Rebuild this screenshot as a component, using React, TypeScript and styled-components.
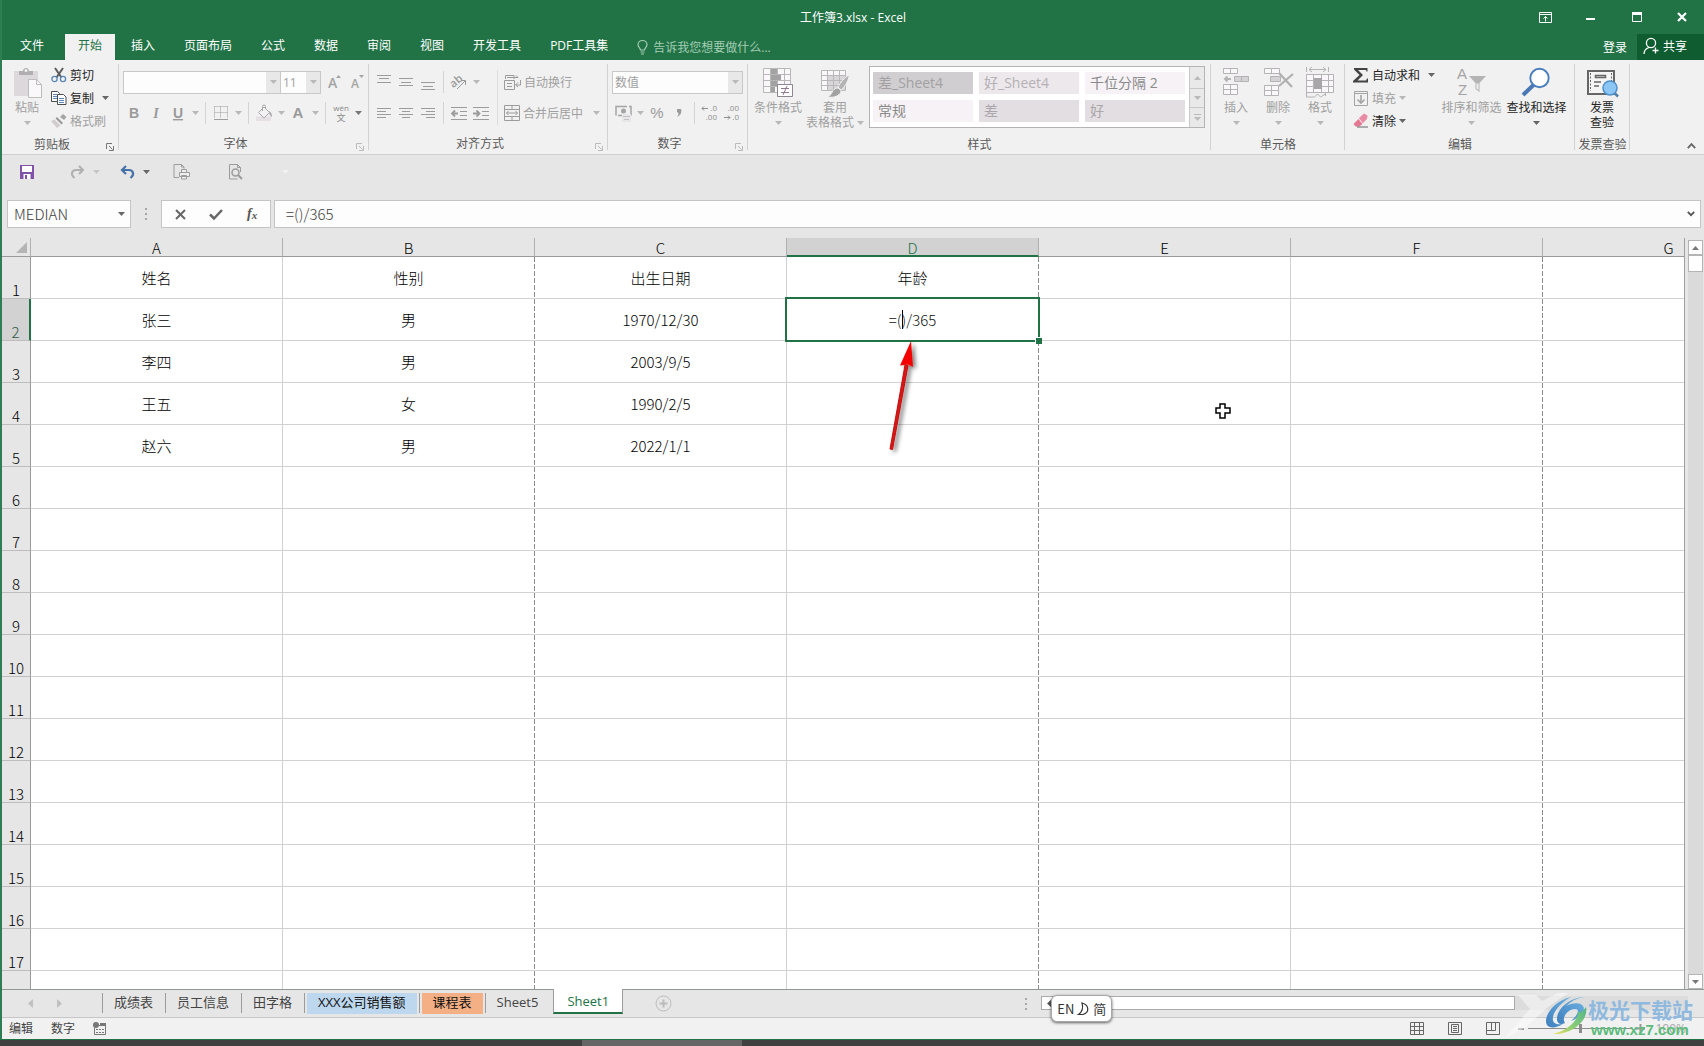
import React from 'react';
import styled, { createGlobalStyle, css } from 'styled-components';

const UI = `"Open Sans", "Noto Sans CJK SC", sans-serif`;
const CELL = `"Noto Sans CJK SC", sans-serif`;
const GREEN = '#217346';

const GlobalStyle = createGlobalStyle`
  * { box-sizing: border-box; }
  body { margin: 0; background: #e6e6e6; font-family: ${UI}; font-size: 12px; color: #262626; }
  button, input, select { font-family: inherit; font-size: inherit; color: inherit; }
  button { border: 0; background: none; padding: 0; margin: 0; white-space: nowrap; }
  svg { display: block; flex: none; overflow: visible; }
`;

const Shell = styled.div`
  height: 100vh;
  display: flex;
  flex-direction: column;
  overflow: hidden;
`;
const Window = styled.div`
  flex: 1;
  min-height: 0;
  display: flex;
  flex-direction: column;
  position: relative;
  border-left: 2px solid #2f7d53;
  border-bottom: 1px solid ${GREEN};
`;

/* ---------- title bar and ribbon tabs ---------- */
const TitleBar = styled.header`
  flex: none;
  height: 34px;
  background: ${GREEN};
  color: #fff;
  display: grid;
  grid-template-columns: 1fr auto 1fr;
  align-items: center;
`;
const Title = styled.h1`
  grid-column: 2;
  margin: 0;
  font-size: 12px;
  font-weight: 400;
`;
const WindowButtons = styled.div`
  display: flex;
  justify-content: flex-end;
  button { width: 46px; height: 30px; display: grid; place-items: center; }
  button:last-child { width: 44px; }
`;
const TabBar = styled.nav`
  flex: none;
  height: 26px;
  background: ${GREEN};
  color: #fff;
  display: flex;
  gap: 3px;
`;
const RibbonTab = styled.button<{ $active?: boolean; $file?: boolean }>`
  padding: 0 13px 2px;
  line-height: 22px;
  ${p => p.$file && css`width: 60px;`}
  ${p => p.$active && css`background: #f1f1f1; color: ${GREEN};`}
`;
const TellMe = styled.button`
  display: flex;
  align-items: center;
  gap: 5px;
  padding-left: 13px;
  color: #a3cdb4;
`;
const Account = styled.div`
  margin-left: auto;
  display: flex;
  gap: 10px;
`;
const Share = styled.button`
  display: flex;
  align-items: center;
  gap: 4px;
  width: 67px;
  padding: 0 0 2px 6px;
  background: #0e5c2f;
`;

/* ---------- ribbon ---------- */
const Ribbon = styled.section`
  flex: none;
  display: flex;
  height: 95px;
  background: #f1f1f1;
  border-bottom: 1px solid #cfcfcf;
`;
const GroupBox = styled.div<{ $w: number }>`
  position: relative;
  flex: none;
  width: ${p => p.$w}px;
  display: flex;
  flex-direction: column;
  &::after {
    content: '';
    position: absolute;
    right: 0;
    top: 4px;
    bottom: 4px;
    width: 1px;
    background: #d2d2d2;
  }
`;
const GroupBody = styled.div<{ $pad: number }>`
  flex: 1;
  display: flex;
  padding-left: ${p => p.$pad}px;
`;
const GroupLabel = styled.div<{ $launch: boolean }>`
  height: 18px;
  margin-bottom: 1px;
  padding-right: ${p => (p.$launch ? 17 : 0)}px;
  line-height: 18px;
  text-align: center;
  color: #5a5a5a;
  white-space: nowrap;
`;
const Launcher = styled.button`
  position: absolute;
  right: 5px;
  bottom: 3px;
`;
const Stack = styled.div<{ $w?: number }>`
  display: flex;
  flex-direction: column;
  padding-top: 3px;
  ${p => p.$w && css`width: ${p.$w}px;`}
`;
const SmallButton = styled.button<{ $off?: boolean; $far?: boolean }>`
  height: 23px;
  display: flex;
  align-items: center;
  gap: 3px;
  color: ${p => (p.$off ? '#a0a0a0' : '#262626')};
  svg:nth-of-type(2) { margin-left: ${p => (p.$far ? 5 : 0)}px; }
`;
const BigButton = styled.button<{ $w: number; $off?: boolean }>`
  width: ${p => p.$w}px;
  height: 70px;
  margin-top: 6px;
  display: flex;
  flex-direction: column;
  align-items: center;
  line-height: 15px;
  color: ${p => (p.$off ? '#a0a0a0' : '#262626')};
  > svg:first-child { margin-bottom: 2px; }
`;
const BelowCaret = styled.span`
  height: 15px;
  display: grid;
  place-items: center;
`;
const SecondLine = styled.span`
  display: flex;
  align-items: center;
  gap: 3px;
`;
const Rows = styled.div<{ $w?: number; $grow?: boolean }>`
  display: flex;
  flex-direction: column;
  gap: 7px;
  padding-top: 10px;
  ${p => p.$w && css`width: ${p.$w}px;`}
  ${p => p.$grow && css`flex: 1;`}
`;
const Row = styled.div`
  display: flex;
  align-items: center;
  height: 24px;
`;
const Tool = styled.button`
  width: 22px;
  height: 24px;
  display: grid;
  place-items: center;
`;
const WideTool = styled(Tool)`
  width: 24px;
  &:first-of-type { margin-left: 4px; }
`;
const CaretTool = styled.button<{ $end?: boolean }>`
  width: 12px;
  height: 24px;
  display: grid;
  place-items: center;
  ${p => p.$end && css`margin-left: auto; margin-right: 6px;`}
`;
const Rule = styled.span`
  width: 1px;
  height: 22px;
  margin: 0 4px;
  background: #d4d4d4;
`;
const TallRule = styled.span`
  width: 1px;
  height: 55px;
  margin: 10px 6px 0 0;
  background: #dcdcdc;
`;
const TextTool = styled.button`
  display: flex;
  align-items: center;
  gap: 3px;
  color: #a0a0a0;
`;
const SelectBox = styled.label<{ $w: number }>`
  width: ${p => p.$w}px;
  height: 23px;
  display: flex;
  border: 1px solid #c8c8c8;
  background: #fdfdfd;
  margin-right: -1px;
  select {
    appearance: none;
    flex: 1;
    min-width: 0;
    border: 0;
    padding: 0 2px;
    background: none;
    color: #a0a0a0;
  }
  span {
    width: 14px;
    display: grid;
    place-items: center;
    background: #e8e8e8;
  }
`;
const Gallery = styled.div`
  display: flex;
  height: 62px;
  margin: 6px 0 0 2px;
  border: 1px solid #b4b4b4;
  background: #fff;
`;
const Swatches = styled.div`
  display: grid;
  grid-template-columns: repeat(3, 100px);
  grid-template-rows: 22px 22px;
  gap: 6px;
  padding: 5px 4px 5px 3px;
`;
const Swatch = styled.button<{ $bg: string; $fg: string }>`
  padding-left: 5px;
  text-align: left;
  font-size: 14px;
  line-height: 20px;
  background: ${p => p.$bg};
  color: ${p => p.$fg};
`;
const GalleryScroll = styled.div`
  width: 15px;
  display: grid;
  grid-template-rows: 21px 19px 1fr;
  border-left: 1px solid #c8c8c8;
  background: #e9e9e9;
  button { display: grid; place-items: center; }
  button + button { border-top: 1px solid #c8c8c8; }
`;
const Collapse = styled.button`
  align-self: flex-end;
  margin: 0 8px 5px auto;
`;

/* ---------- quick access and formula bar ---------- */
const QuickAccess = styled.div`
  flex: none;
  height: 45px;
  display: flex;
  align-items: center;
  padding: 0 0 12px 14px;
`;
const Quick = styled.button<{ $gap: number; $before?: number }>`
  width: 22px;
  height: 22px;
  display: grid;
  place-items: center;
  margin: 0 ${p => p.$gap}px 0 ${p => p.$before ?? 0}px;
`;
const FormulaBar = styled.div`
  flex: none;
  display: flex;
  height: 28px;
  padding: 0 3px 0 5px;
  margin-bottom: 10px;
`;
const Field = styled.label<{ $w?: number; $pad: number }>`
  display: flex;
  align-items: center;
  ${p => (p.$w ? css`width: ${p.$w}px;` : css`flex: 1;`)}
  padding: 0 5px 0 ${p => p.$pad}px;
  background: #fdfdfd;
  border: 1px solid #c4c4c4;
  input {
    flex: 1;
    min-width: 0;
    border: 0;
    padding: 0;
    background: none;
    outline: none;
    font: 300 15px/20px ${CELL};
    color: #404040;
  }
`;
const Grip = styled.span<{ $w: number; $push?: boolean }>`
  width: ${p => p.$w}px;
  display: grid;
  place-items: center;
  ${p => p.$push && css`margin-left: auto;`}
`;
const FormulaButtons = styled.div`
  display: flex;
  width: 110px;
  margin-right: 3px;
  background: #fdfdfd;
  border: 1px solid #c4c4c4;
  button { flex: 1; display: grid; place-items: center; }
`;

/* ---------- sheet ---------- */
const SheetArea = styled.main`
  flex: 1;
  min-height: 0;
  display: flex;
  border-bottom: 1px solid #8f9a93;
`;
const GridPane = styled.div`
  flex: 1;
  min-width: 0;
  overflow: hidden;
  background: #fff;
  border-right: 1px solid #a0a0a0;
`;
const Grid = styled.table`
  table-layout: fixed;
  width: 1793px;
  border-collapse: separate;
  border-spacing: 0;
  font: 300 15px/20px ${CELL};
  color: #000;
`;
const HeadCol = styled.col`width: 29px;`;
const DataCol = styled.col`width: 252px;`;
const ColHead = styled.th<{ $active?: boolean }>`
  height: 19px;
  padding: 2px 0 0;
  font-weight: 300;
  line-height: 16px;
  background: #e6e6e6;
  border-right: 1px solid #b0b0b0;
  border-bottom: 1px solid #9a9a9a;
  ${p => p.$active && css`background: #d2d2d2; color: ${GREEN}; border-bottom: 2px solid ${GREEN}; line-height: 15px;`}
`;
const Corner = styled.td`
  padding: 0;
  background: #e6e6e6;
  border-right: 1px solid #b0b0b0;
  border-bottom: 1px solid #9a9a9a;
  svg { margin-left: 14px; }
`;
const RowHead = styled.th<{ $active?: boolean }>`
  height: 42px;
  padding: 0;
  vertical-align: bottom;
  font-weight: 300;
  line-height: 16px;
  background: #e6e6e6;
  border-right: 1px solid #9a9a9a;
  border-bottom: 1px solid #bdbdbd;
  ${p => p.$active && css`background: #d2d2d2; color: #2f5a44; border-right: 2px solid ${GREEN};`}
`;
const Cell = styled.td<{ $pageBreak: boolean; $editing: boolean }>`
  position: relative;
  height: 42px;
  padding: 0;
  text-align: center;
  border-bottom: 1px solid #d2d2d2;
  ${p => p.$editing && css`z-index: 1;`}
  ${p =>
    p.$pageBreak
      ? css`
          border-right: 1px solid transparent;
          background: repeating-linear-gradient(#8c8c8c 0 5px, #fff 5px 7px) right top / 1px 42px no-repeat border-box;
        `
      : css`border-right: 1px solid #d2d2d2;`}
`;
const EditFrame = styled.div`
  position: absolute;
  inset: -2px -2px -2px -2px;
  border: 2px solid ${GREEN};
  background: #fff;
  display: flex;
  &::after {
    content: '';
    position: absolute;
    right: -4px;
    bottom: -4px;
    width: 6px;
    height: 6px;
    background: ${GREEN};
    border-left: 1px solid #fff;
    border-top: 1px solid #fff;
  }
  input {
    width: 100%;
    border: 0;
    padding: 0;
    text-align: center;
    background: none;
    outline: none;
    font: 300 15px/20px ${CELL};
    color: #111;
  }
`;
const TextCaret = styled.span`
  position: absolute;
  left: calc(50% - 11px);
  top: 11px;
  width: 1px;
  height: 19px;
  background: #000;
`;
const ArrowMark = styled.svg`
  position: absolute;
  left: 98px;
  top: 41px;
  z-index: 2;
  pointer-events: none;
`;
const Pointer = styled.svg`
  position: absolute;
  left: 176px;
  top: 20px;
`;
const VScroll = styled.div`
  width: 15px;
  margin: 2px 1px 0 3px;
  display: flex;
  flex-direction: column;
  justify-content: space-between;
  background: #dadada;
  button, i {
    display: grid;
    place-items: center;
    width: 15px;
    height: 15px;
    background: #fff;
    border: 1px solid #b4b4b4;
  }
  i { height: 17px; }
`;

/* ---------- sheet tabs and status bar ---------- */
const SheetTabs = styled.div`
  flex: none;
  height: 28px;
  display: flex;
  border-bottom: 1px solid #c6c6c6;
  font-size: 13px;
`;
const TabNav = styled.div`
  width: 100px;
  display: flex;
  align-items: center;
  padding-left: 26px;
  gap: 24px;
`;
const SheetTab = styled.button<{ $bg?: string }>`
  height: 20px;
  margin-top: 3px;
  border-left: 1px solid #9c9c9c;
  color: ${p => (p.$bg ? '#111' : '#444')};
  span {
    display: block;
    margin: 0 2px 0 ${p => (p.$bg ? 2 : 1)}px;
    padding: 0 ${p => (p.$bg ? 11 : 10)}px;
    line-height: 18px;
    height: 21px;
    background: ${p => p.$bg || 'none'};
  }
`;
const ActiveTab = styled.button`
  height: 25px;
  margin: -1px 0 0 3px;
  padding: 0 13px;
  line-height: 24px;
  color: ${GREEN};
  background: #fff;
  border: 1px solid #9c9c9c;
  border-top: 0;
  border-bottom: 2px solid ${GREEN};
`;
const AddSheet = styled.button`
  margin-left: 32px;
`;
const HScroll = styled.div`
  position: relative;
  flex: 0 0 38%;
  height: 14px;
  margin: 6px 16px 0 0;
  background: #dcdcdc;
`;
const HThumb = styled.div`
  display: flex;
  align-items: center;
  width: 474px;
  height: 14px;
  padding-left: 5px;
  background: #fff;
  border: 1px solid #ababab;
`;
const InputMode = styled.div`
  position: absolute;
  left: 10px;
  top: -1px;
  display: flex;
  align-items: center;
  gap: 4px;
  height: 27px;
  padding: 0 5px;
  border-radius: 6px;
  border: 1px solid #a8a8a8;
  background: #fff;
  box-shadow: 0 1px 3px rgba(0, 0, 0, 0.6);
  white-space: nowrap;
  font: 13px/20px ${CELL};
  color: #333;
`;
const StatusBar = styled.footer`
  flex: none;
  height: 21px;
  display: flex;
  align-items: center;
  gap: 18px;
  padding: 0 18px 0 7px;
  background: #f1f1f1;
  color: #444;
  line-height: 18px;
`;
const Views = styled.div`
  margin-left: auto;
  display: flex;
  gap: 24px;
`;
const Zoom = styled.div`
  display: flex;
  align-items: center;
  gap: 4px;
  color: #a8a8a8;
  font-size: 12px;
  input {
    appearance: none;
    width: 104px;
    height: 1px;
    margin: 0;
    background: #8c8c8c;
  }
  input::-webkit-slider-thumb {
    appearance: none;
    width: 3px;
    height: 9px;
    background: #8c8c8c;
  }
  span { margin-left: 6px; }
`;
const Taskbar = styled.div`
  flex: none;
  height: 6px;
  padding-left: 582px;
  background: #404040;
  i { display: block; width: 160px; height: 6px; background: #666; }
`;
const Brand = styled.div`
  position: absolute;
  right: 11px;
  bottom: 0;
  display: flex;
  align-items: flex-end;
  pointer-events: none;
`;
const BrandText = styled.div`
  display: flex;
  flex-direction: column;
  strong {
    font: 700 21px/24px ${CELL};
    color: #8fb9de;
    white-space: nowrap;
  }
  em {
    font: 700 15px/18px "Liberation Sans", sans-serif;
    color: #5cbc7c;
    padding-left: 3px;
  }
`;

/* ---------- drawings ---------- */
const Caret = ({ c = '#b8b8b8' }: { c?: string }) => (
  <svg width="7" height="4" viewBox="0 0 7 4"><path d="M0 0h7L3.5 4z" fill={c} /></svg>
);
const Up = ({ c = '#777' }: { c?: string }) => (
  <svg width="7" height="4" viewBox="0 0 7 4"><path d="M0 4h7L3.5 0z" fill={c} /></svg>
);
const Side = ({ c, flip }: { c: string; flip?: boolean }) => (
  <svg width="5" height="9" viewBox="0 0 5 9"><path d={flip ? 'M0 0v9l5-4.5z' : 'M5 0v9L0 4.5z'} fill={c} /></svg>
);
const LaunchIcon = ({ c }: { c: string }) => (
  <svg width="8" height="8" viewBox="0 0 8 8" fill="none" stroke={c}>
    <path d="M.5 6V.5H6M3 3l3.5 3.5M7.500 3v4.500H3" />
  </svg>
);
const Dots = () => (
  <svg width="2" height="12" viewBox="0 0 2 12" fill="#a6a6a6">
    <path d="M0 0h2v2H0zM0 5h2v2H0zM0 10h2v2H0z" />
  </svg>
);
const Lines = ({ rows }: { rows: [number, number, number][] }) => (
  <svg width="14" height="16" viewBox="0 0 14 16" stroke="#9c9c9c">
    {rows.map(([x1, x2, y]) => <path key={y} d={`M${x1} ${y}.5H${x2}`} />)}
  </svg>
);
const PasteIcon = () => (
  <svg width="32" height="32" viewBox="0 0 32 32">
    <path d="M3 5h24v25H3z" fill="#dcd8dc" />
    <path d="M8 9V5h4c0-4 6-4 6 0h4v4z" fill="#b0aeb0" />
    <circle cx="15" cy="4.500" r="1.500" fill="#f1f1f1" />
    <path d="M17.500 13.500h8l5 5v13h-13z" fill="#fbf8fb" stroke="#bdbdbd" />
    <path d="M25.500 13.500v5h5" fill="none" stroke="#bdbdbd" />
  </svg>
);
const CutIcon = () => (
  <svg width="16" height="16" viewBox="0 0 16 16" fill="none">
    <path d="M4 1l6.500 9.500M12 1L5.500 10.500" stroke="#5c5c5c" strokeWidth="2" />
    <circle cx="3.500" cy="12" r="2.600" stroke="#5b86b8" strokeWidth="1.300" />
    <circle cx="12" cy="12" r="2.600" stroke="#5b86b8" strokeWidth="1.300" />
  </svg>
);
const CopyIcon = () => (
  <svg width="16" height="16" viewBox="0 0 16 16" fill="#fff" stroke="#4d4d4d">
    <path d="M.5 1.500h6l2 2v8h-8z" />
    <path d="M2 4.500h4M2 6.500h4M2 8.500h4" stroke="#5b86b8" />
    <path d="M6.500 4.500h6l2.500 2.500v7.500H6.500z" />
    <path d="M8 8.500h5M8 10.500h5M8 12.500h5" stroke="#5b86b8" />
  </svg>
);
const BrushIcon = () => (
  <svg width="16" height="16" viewBox="0 0 16 16">
    <path d="M9 4l3-3 3.500 3-2.500 3z" fill="#a4a4a4" />
    <path d="M6 4l6 6-1.500 1.500-6-6z" fill="#9a9a9a" />
    <path d="M3.500 6.500l6 6L6 15 0 8z" fill="#d0ccd0" />
  </svg>
);
const Letter = ({ t, size = 14, style }: { t: string; size?: number; style?: React.CSSProperties }) => (
  <svg width="16" height="18" viewBox="0 0 16 18">
    <text x="8" y="14" textAnchor="middle" fontFamily="Liberation Sans, sans-serif" fontSize={size} fill="#9a9a9a" style={style}>{t}</text>
  </svg>
);
const GrowIcon = ({ down }: { down?: boolean }) => (
  <svg width="16" height="20" viewBox="0 0 16 20">
    <text x="0" y="16" fontFamily="Open Sans, sans-serif" fontWeight="600" fontSize={down ? 12 : 14} fill="#a4a4a4">A</text>
    <path d={down ? 'M8 3h5l-2.500 3z' : 'M8 6h5l-2.500-3z'} fill="#a4a4a4" />
  </svg>
);
const BordersIcon = () => (
  <svg width="14" height="14" viewBox="0 0 14 14" fill="none" stroke="#9c9c9c">
    <path d="M.5.5h13M.5 6.500h13M.5.5v12M6.500.5v12M13.500.5v12" strokeDasharray="1 1" />
    <path d="M0 13.500h14" />
  </svg>
);
const FillColorIcon = () => (
  <svg width="17" height="16" viewBox="0 0 17 16" fill="none">
    <path d="M0 11.500h15V16H0z" fill="#e6e0e4" />
    <path d="M2.500 7.500L8 2l5.500 5.500L8 13z" fill="#f4f1f4" stroke="#a8a8a8" />
    <path d="M6.500 6V1.500a1.500 1.500 0 013 0V4" stroke="#a8a8a8" />
    <path d="M13 6c2 1 3 3 3 6-2-1-3-3-3-6z" fill="#a8a8a8" />
  </svg>
);
const PinyinIcon = () => (
  <svg width="18" height="20" viewBox="0 0 18 20" fill="#888">
    <text x="9" y="8" textAnchor="middle" fontFamily="Open Sans" fontSize="8">wén</text>
    <text x="9" y="18" textAnchor="middle" fontFamily="Noto Sans CJK SC" fontSize="9">文</text>
  </svg>
);
const OrientIcon = () => (
  <svg width="18" height="18" viewBox="0 0 18 18" fill="none">
    <text x="0" y="12" fontFamily="Open Sans" fontSize="11" fontWeight="600" fill="#989898" transform="rotate(-40 6 9)">ab</text>
    <path d="M7 16L15 8M11 7.500h4.500V12" stroke="#989898" />
  </svg>
);
const IndentIcon = ({ right }: { right?: boolean }) => (
  <svg width="16" height="13" viewBox="0 0 16 13" fill="none" stroke="#9c9c9c">
    <path d="M0 .5h16M9 4.500h7M9 8.500h7M0 12.500h16" />
    <path d={right ? 'M0 6.500h6M3.500 3.500l3 3-3 3' : 'M1 6.500h6M4 3.500l-3 3 3 3'} strokeWidth="1.800" />
  </svg>
);
const WrapIcon = () => (
  <svg width="17" height="16" viewBox="0 0 17 16" fill="none" stroke="#9c9c9c">
    <path d="M1.500 5V1.500H10V5M3 3.500h11M12 1.500l2 2" />
    <path d="M.5 6.500h10v9H.5zM3 9.500h5M3 12.500h5" />
    <path d="M16.500 6v5H12M14 8.500L11.500 11l2.500 2" />
  </svg>
);
const MergeIcon = () => (
  <svg width="16" height="16" viewBox="0 0 16 16" fill="none" stroke="#9c9c9c">
    <path d="M.5.500h15v15H.5zM.5 4.500h15M.5 11.500h15M8 0v4.500M8 11.500V16" />
    <path d="M2.500 8h11M4.500 6L2.500 8l2 2M11.500 6l2 2-2 2" />
  </svg>
);
const MoneyIcon = () => (
  <svg width="17" height="17" viewBox="0 0 17 17" fill="none">
    <path d="M1 1.500h15v9H1z" stroke="#a4a4a4" strokeWidth="1.500" strokeDasharray="11 2" />
    <circle cx="8.500" cy="6" r="2.500" fill="#a4a4a4" />
    <path d="M7 9h9v8H7z" fill="#e9e6e9" />
    <path d="M8 11.500h7M9 14.500h5" stroke="#c4c0c4" />
  </svg>
);
const DecimalIcon = ({ less }: { less?: boolean }) => (
  <svg width="18" height="20" viewBox="0 0 18 20" fill="#8e8e8e">
    <text x="16" y="8" textAnchor="end" fontFamily="Open Sans" fontSize="8">{less ? '.00' : '.0'}</text>
    <text x="16" y="17" textAnchor="end" fontFamily="Open Sans" fontSize="8">{less ? '.0' : '.00'}</text>
    <path d={less ? 'M1 14.500h6M5 12.500l2 2-2 2' : 'M1 5.500h6M3 3.500l-2 2 2 2'} fill="none" stroke="#8e8e8e" />
  </svg>
);
const CondIcon = () => (
  <svg width="32" height="32" viewBox="0 0 32 32" fill="none" stroke="#b8b8b8">
    <path d="M1.500 2.500h27v24h-27zM1.500 8.500h27M1.500 14.500h27M1.500 20.500h27M8.500 2.500v24M15.500 2.500v24M22.500 2.500v24" fill="#f9f7f9" />
    <path d="M9 3h6v5H9zM9 9h10v5H9zM9 15h6v5H9zM9 21h4v5H9z" fill="#a2a2a2" stroke="none" />
    <path d="M15.500 18.500h15v12h-15z" fill="#fff" stroke="#8d8590" />
    <path d="M19 22.500h8M19 26.500h8M25 20l-4 9" stroke="#8d7a90" />
  </svg>
);
const TableFmtIcon = () => (
  <svg width="32" height="32" viewBox="0 0 32 32" fill="none" stroke="#b8b8b8">
    <path d="M2.500 4.500h24v20h-24z" fill="#f9f7f9" />
    <path d="M8 10h18v14H8z" fill="#d8d6d8" stroke="none" />
    <path d="M2.500 9.500h24M2.500 14.500h24M2.500 19.500h24M8.500 4.500v20M14.500 4.500v20M20.500 4.500v20" />
    <path d="M30 9c-4 2-9 8-11 12l3 3c4-3 7-9 8-13z" fill="#b4b4b4" stroke="#f1f1f1" />
    <path d="M18 22c2 0 4 2 4 4-2 4-7 6-13 5 4-2 4-8 9-9z" fill="#a2a2a2" stroke="#f1f1f1" />
  </svg>
);
const InsertIcon = () => (
  <svg width="32" height="32" viewBox="0 0 32 32" fill="#f9f7f9" stroke="#b4b4b4">
    <path d="M3.500 2.500h14v5h-14zM10.500 2.500v5M3.500 18.500h14v10h-14zM3.500 23.500h14M10.500 18.500v10" />
    <path d="M14.500 10.500h14v5h-14zM21.500 10.500v5" fill="#d4d2d4" />
    <path d="M11 13H5M7.500 10.500L5 13l2.500 2.500" fill="none" strokeWidth="2" />
  </svg>
);
const DeleteIcon = () => (
  <svg width="32" height="32" viewBox="0 0 32 32" fill="#f9f7f9" stroke="#b4b4b4">
    <path d="M2.500 2.500h15v5h-15zM9.500 2.500v5M2.500 19.500h14v10h-14zM2.500 24.500h14M9.500 19.500v10" />
    <path d="M8.500 10.500h10v5h-10z" fill="#d4d2d4" />
    <path d="M17 7l13 14M31 8L17 20" fill="none" stroke="#b0b0b0" strokeWidth="2.200" />
  </svg>
);
const FormatIcon = () => (
  <svg width="32" height="32" viewBox="0 0 32 32" fill="none" stroke="#b4b4b4">
    <path d="M2.500 1v5M24.500 1v5M5 3.500h17M8 1L5 3.500 8 6M19 1l3 2.500L19 6" />
    <path d="M2.500 8.500h27v18h-27zM2.500 14.500h27M2.500 20.500h27M9.500 8.500v18M17.500 8.500v18M24.500 8.500v18" fill="#f9f7f9" />
    <path d="M10 12h8v11h-8z" fill="#a8a6a8" stroke="none" />
    <path d="M2.500 26v5h8l3-3 3 3 5-3M21.500 30v-3" />
  </svg>
);
const SumIcon = () => (
  <svg width="16" height="16" viewBox="0 0 16 16"><path d="M1 1h13.500v3.500h-1L13 3H5l5 5-5.500 5.500H13l1-2h1V15.500H0V14l6.500-6L1 2.500z" fill="#444" /></svg>
);
const FillIcon = () => (
  <svg width="16" height="16" viewBox="0 0 16 16" fill="none" stroke="#a4a4a4">
    <path d="M1.500 1.500h13v14h-13zM1.500 3.500h13" />
    <path d="M8 5v8M4.500 9.500L8 13l3.500-3.500" strokeWidth="1.600" />
  </svg>
);
const EraserIcon = () => (
  <svg width="16" height="16" viewBox="0 0 16 16">
    <path d="M6 5l5-4.500 3.500 2L14 6l-4.500 4.500z" fill="#e98ba4" />
    <path d="M6 5.500L9.500 11 6 13.500H2.500L.5 11z" fill="#e57792" />
    <path d="M5.500 5.500l4 5" fill="none" stroke="#fff" strokeWidth=".8" />
    <path d="M4 14h11" stroke="#666" />
  </svg>
);
const SortIcon = () => (
  <svg width="32" height="32" viewBox="0 0 32 32">
    <text x="1" y="13" fontFamily="Liberation Sans" fontWeight="400" fontSize="15" fill="#a4a4a4">A</text>
    <text x="2" y="29" fontFamily="Liberation Sans" fontWeight="400" fontSize="15" fill="#a4a4a4">Z</text>
    <path d="M13 10h17l-6.500 7v9l-4-3v-6z" fill="#b4b4b4" />
    <path d="M20.500 17.500v5l2 1.500v-6.500" fill="#f1f1f1" />
  </svg>
);
const FindIcon = () => (
  <svg width="32" height="32" viewBox="0 0 32 32" fill="none">
    <path d="M13.500 18L2 29" stroke="#4a78b5" strokeWidth="4" />
    <circle cx="18.500" cy="12" r="9.200" fill="#fff" stroke="#4a7ebb" strokeWidth="1.900" />
  </svg>
);
const InvoiceIcon = () => (
  <svg width="32" height="32" viewBox="0 0 32 32" fill="none" stroke="#666">
    <path d="M2 5h26v23H2z" fill="#f4f4f4" strokeWidth="2" />
    <path d="M4.500 7v18M25.500 7v8" strokeDasharray="2 1.500" />
    <path d="M9.500 9.500h10v2h-10zM8 16h7M8 20h5" strokeWidth="1.500" />
    <path d="M27 25.500l5 5" stroke="#4f7fa8" strokeWidth="2.500" />
    <circle cx="24" cy="22" r="7" fill="#8cc6f5" stroke="#4f8fc8" strokeWidth="1.500" />
  </svg>
);
const BulbIcon = () => (
  <svg width="11" height="15" viewBox="0 0 11 15" fill="none" stroke="#a3cdb4">
    <path d="M3.500 10C3.500 8 1 7 1 4.800a4.500 4.300 0 019 0C10 7 7.500 8 7.500 10zM3.500 12h4M4 14h3" strokeWidth="1.200" />
  </svg>
);
const PersonIcon = () => (
  <svg width="16" height="18" viewBox="0 0 16 18" fill="none" stroke="#fff" strokeWidth="1.300">
    <circle cx="8" cy="6" r="4.600" />
    <path d="M1 17c0-3.500 2-5.500 5-6.500M12.500 10.500v6M9.500 13.500h6" />
  </svg>
);
const BrandMark = () => (
  <svg width="84" height="46" viewBox="0 0 84 46">
    <defs>
      <linearGradient id="leaf" x1="1" y1="0" x2="0" y2="1">
        <stop offset="0" stopColor="#4fb48a" />
        <stop offset=".6" stopColor="#8fcf74" />
        <stop offset="1" stopColor="#eee15a" />
      </linearGradient>
      <linearGradient id="wave" x1="1" y1="0" x2="0" y2="1">
        <stop offset="0" stopColor="#6db4e4" />
        <stop offset="1" stopColor="#3f7fbe" />
      </linearGradient>
    </defs>
    <path d="M0 46L26 16 14 2h18l6 6L54 0h10L44 14 22 34z" fill="#fff" opacity=".45" />
    <path d="M67 4C53 7 42 19 42 28c0 8 9 8 17 3-7 1-11-1-10-7C50 17 58 9 67 4z" fill="url(#wave)" />
    <path d="M80 4C65 5 53 16 53 26c0 5 4 6 8 4-4-5 3-15 11-14 4 1 1 7-5 12 10-4 15-11 12-15-3-4-11-3-17 0C67 8 73 5 80 4z" fill="url(#wave)" />
    <path d="M82 14c3 14-15 28-33 27 10-2 25-11 25-22 4 0 6-2 8-5z" fill="url(#leaf)" />
  </svg>
);

type GroupProps = { w: number; pad: number; label: string; launch?: string; children: React.ReactNode };
const Group = ({ w, pad, label, launch, children }: GroupProps) => (
  <GroupBox $w={w} role="group" aria-label={label}>
    <GroupBody $pad={pad}>{children}</GroupBody>
    <GroupLabel $launch={!!launch}>{label}</GroupLabel>
    {launch && <Launcher aria-label={`${label}设置`}><LaunchIcon c={launch} /></Launcher>}
  </GroupBox>
);

const tabs = ['插入', '页面布局', '公式', '数据', '审阅', '视图', '开发工具', 'PDF工具集'];
const columns = ['A', 'B', 'C', 'D', 'E', 'F', 'G'];
const pageBreakAfter = [1, 3, 5];
const data: string[][] = [
  ['姓名', '性别', '出生日期', '年龄'],
  ['张三', '男', '1970/12/30'],
  ['李四', '男', '2003/9/5'],
  ['王五', '女', '1990/2/5'],
  ['赵六', '男', '2022/1/1'],
];
const rowNumbers = Array.from({ length: 18 }, (_, i) => i);
const swatches = [
  ['差_Sheet4', '#d0ced0', '#a2a0a2'],
  ['好_Sheet4', '#ece8ec', '#b4b0b4'],
  ['千位分隔 2', '#f6f2f6', '#8a8a8a'],
  ['常规', '#f6f2f6', '#8a8a8a'],
  ['差', '#e2dee2', '#aaa6aa'],
  ['好', '#e2dee2', '#aaa6aa'],
];

const EditingCell = () => (
  <>
    <EditFrame>
      <input aria-label="D2" defaultValue="=()/365" />
      <TextCaret />
    </EditFrame>
    <ArrowMark width="44" height="118" viewBox="0 0 44 118">
      <defs>
        <filter id="arrowShadow" x="-50%" y="-20%" width="200%" height="140%">
          <feDropShadow dx="3" dy="2" stdDeviation="2" floodColor="#000" floodOpacity=".5" />
        </filter>
      </defs>
      <g filter="url(#arrowShadow)">
        <path d="M5 109L20 25l3 .5L7.500 109.500z" fill="#d81414" stroke="#c01010" />
        <path d="M26 1l2 26-5-2.500-8 1z" fill="#f50000" />
      </g>
    </ArrowMark>
  </>
);

export default function App() {
  return (
    <Shell>
      <GlobalStyle />
      <Window>
        <TitleBar>
          <Title>工作簿3.xlsx - Excel</Title>
          <WindowButtons>
            <button aria-label="功能区显示选项">
              <svg width="13" height="11" viewBox="0 0 13 11" fill="none" stroke="#fff"><path d="M.5.500h12v10H.5zM.5 2.500h12M6.500 9.500v-5M4.500 6.500l2-2 2 2" /></svg>
            </button>
            <button aria-label="最小化">
              <svg width="10" height="10" viewBox="0 0 10 10"><path d="M0 6h9v2H0z" fill="#fff" /></svg>
            </button>
            <button aria-label="最大化">
              <svg width="10" height="10" viewBox="0 0 10 10"><path d="M.5 1.500h9v8h-9z" fill="none" stroke="#fff" /><path d="M0 0h10v3H0z" fill="#fff" /></svg>
            </button>
            <button aria-label="关闭">
              <svg width="10" height="10" viewBox="0 0 10 10"><path d="M1 1l8 8M9 1L1 9" stroke="#fff" strokeWidth="2.200" /></svg>
            </button>
          </WindowButtons>
        </TitleBar>

        <TabBar>
          <RibbonTab $file>文件</RibbonTab>
          <RibbonTab $active>开始</RibbonTab>
          {tabs.map(t => <RibbonTab key={t}>{t}</RibbonTab>)}
          <TellMe><BulbIcon />告诉我您想要做什么...</TellMe>
          <Account>
            <button>登录</button>
            <Share><PersonIcon />共享</Share>
          </Account>
        </TabBar>

        <Ribbon>
          <Group w={117} pad={1} label="剪贴板" launch="#777">
            <BigButton $w={48} $off><PasteIcon />粘贴<BelowCaret><Caret /></BelowCaret></BigButton>
            <Stack>
              <SmallButton><CutIcon />剪切</SmallButton>
              <SmallButton $far><CopyIcon />复制<Caret c="#666" /></SmallButton>
              <SmallButton $off><BrushIcon />格式刷</SmallButton>
            </Stack>
          </Group>

          <Group w={250} pad={4} label="字体" launch="#bbb">
            <Rows>
              <Row>
                <SelectBox $w={158}><select aria-label="字体"><option></option></select><span><Caret /></span></SelectBox>
                <SelectBox $w={41}><select aria-label="字号"><option>11</option></select><span><Caret /></span></SelectBox>
                <WideTool aria-label="增大字号"><GrowIcon /></WideTool>
                <Tool aria-label="减小字号"><GrowIcon down /></Tool>
              </Row>
              <Row>
                <Tool aria-label="加粗"><Letter t="B" style={{ fontWeight: 700 }} /></Tool>
                <Tool aria-label="倾斜"><Letter t="I" style={{ fontWeight: 700, fontStyle: 'italic', fontFamily: 'Liberation Serif' }} /></Tool>
                <Tool aria-label="下划线"><Letter t="U" style={{ fontWeight: 700, textDecoration: 'underline' }} /></Tool>
                <CaretTool aria-label="下划线选项"><Caret /></CaretTool>
                <Rule />
                <Tool aria-label="边框"><BordersIcon /></Tool>
                <CaretTool aria-label="边框选项"><Caret /></CaretTool>
                <Rule />
                <Tool aria-label="填充颜色"><FillColorIcon /></Tool>
                <CaretTool aria-label="填充颜色选项"><Caret /></CaretTool>
                <Tool aria-label="字体颜色"><Letter t="A" size={15} style={{ fontWeight: 700 }} /></Tool>
                <CaretTool aria-label="字体颜色选项"><Caret /></CaretTool>
                <Rule />
                <Tool aria-label="拼音"><PinyinIcon /></Tool>
                <CaretTool aria-label="拼音选项"><Caret c="#777" /></CaretTool>
              </Row>
            </Rows>
          </Group>

          <Group w={239} pad={4} label="对齐方式" launch="#bbb">
            <Rows $w={124}>
              <Row>
                <Tool aria-label="顶端对齐"><Lines rows={[[0, 14, 1], [2, 12, 4], [0, 14, 8]]} /></Tool>
                <Tool aria-label="垂直居中"><Lines rows={[[0, 14, 4], [2, 12, 8], [0, 14, 11]]} /></Tool>
                <Tool aria-label="底端对齐"><Lines rows={[[0, 14, 8], [2, 12, 12], [0, 14, 15]]} /></Tool>
                <Rule />
                <Tool aria-label="方向"><OrientIcon /></Tool>
                <CaretTool aria-label="方向选项"><Caret /></CaretTool>
              </Row>
              <Row>
                <Tool aria-label="左对齐"><Lines rows={[[0, 14, 3], [0, 9, 6], [0, 14, 9], [0, 9, 12]]} /></Tool>
                <Tool aria-label="居中"><Lines rows={[[0, 14, 3], [3, 11, 6], [0, 14, 9], [3, 11, 12]]} /></Tool>
                <Tool aria-label="右对齐"><Lines rows={[[0, 14, 3], [5, 14, 6], [0, 14, 9], [5, 14, 12]]} /></Tool>
                <Rule />
                <Tool aria-label="减少缩进"><IndentIcon /></Tool>
                <Tool aria-label="增加缩进"><IndentIcon right /></Tool>
              </Row>
            </Rows>
            <TallRule />
            <Rows $grow>
              <Row><TextTool><WrapIcon />自动换行</TextTool></Row>
              <Row>
                <TextTool><MergeIcon />合并后居中</TextTool>
                <CaretTool $end aria-label="合并选项"><Caret /></CaretTool>
              </Row>
            </Rows>
          </Group>

          <Group w={140} pad={4} label="数字" launch="#bbb">
            <Rows>
              <Row>
                <SelectBox $w={131}><select aria-label="数字格式"><option>数值</option></select><span><Caret /></span></SelectBox>
              </Row>
              <Row>
                <Tool aria-label="会计数字格式"><MoneyIcon /></Tool>
                <CaretTool aria-label="会计选项"><Caret /></CaretTool>
                <Tool aria-label="百分比"><Letter t="%" size={15} /></Tool>
                <Tool aria-label="千位分隔样式"><svg width="6" height="8" viewBox="0 0 6 8"><path d="M1 0h4c1 3 0 6-4 8 2-3 2-4 0-5z" fill="#9a9a9a" /></svg></Tool>
                <Rule />
                <Tool aria-label="增加小数位数"><DecimalIcon /></Tool>
                <Tool aria-label="减少小数位数"><DecimalIcon less /></Tool>
              </Row>
            </Rows>
          </Group>

          <Group w={463} pad={5} label="样式">
            <BigButton $w={50} $off><CondIcon />条件格式<BelowCaret><Caret /></BelowCaret></BigButton>
            <BigButton $w={64} $off><TableFmtIcon />套用<SecondLine>表格格式<Caret /></SecondLine></BigButton>
            <Gallery>
              <Swatches>
                {swatches.map(([name, bg, fg]) => <Swatch key={name} $bg={bg} $fg={fg}>{name}</Swatch>)}
              </Swatches>
              <GalleryScroll>
                <button aria-label="上一行"><Up c="#bbb" /></button>
                <button aria-label="下一行"><Caret /></button>
                <button aria-label="更多样式"><svg width="7" height="7" viewBox="0 0 7 7" fill="#bbb"><path d="M0 0h7v1H0zM0 3h7L3.500 7z" /></svg></button>
              </GalleryScroll>
            </Gallery>
          </Group>

          <Group w={134} pad={4} label="单元格">
            <BigButton $w={42} $off><InsertIcon />插入<BelowCaret><Caret /></BelowCaret></BigButton>
            <BigButton $w={42} $off><DeleteIcon />删除<BelowCaret><Caret /></BelowCaret></BigButton>
            <BigButton $w={42} $off><FormatIcon />格式<BelowCaret><Caret /></BelowCaret></BigButton>
          </Group>

          <Group w={230} pad={8} label="编辑">
            <Stack $w={86}>
              <SmallButton $far><SumIcon />自动求和<Caret c="#666" /></SmallButton>
              <SmallButton $off><FillIcon />填充<Caret /></SmallButton>
              <SmallButton><EraserIcon />清除<Caret c="#666" /></SmallButton>
            </Stack>
            <BigButton $w={65} $off><SortIcon />排序和筛选<BelowCaret><Caret /></BelowCaret></BigButton>
            <BigButton $w={65}><FindIcon />查找和选择<BelowCaret><Caret c="#666" /></BelowCaret></BigButton>
          </Group>

          <Group w={55} pad={3} label="发票查验">
            <BigButton $w={48}><InvoiceIcon />发票<br />查验</BigButton>
          </Group>
          <Collapse aria-label="折叠功能区">
            <svg width="9" height="6" viewBox="0 0 9 6"><path d="M.8 5.200l3.700-4 3.700 4" fill="none" stroke="#666" strokeWidth="1.800" /></svg>
          </Collapse>
        </Ribbon>

        <QuickAccess>
          <Quick $gap={28} aria-label="保存">
            <svg width="14" height="14" viewBox="0 0 14 14"><path d="M0 0h14v14H0z" fill="#8152a8" /><path d="M2 1h10v6H2zM3.500 9h7v5h-7z" fill="#fff" /><path d="M5 10h2v4H5z" fill="#8152a8" /></svg>
          </Quick>
          <Quick $gap={2} aria-label="恢复">
            <svg width="15" height="14" viewBox="0 0 15 14" fill="none" stroke="#b0b0b0" strokeWidth="2"><path d="M9 1l4 4-4 4M13 5H6C2 5 .5 9 3.500 12l1 1" /></svg>
          </Quick>
          <CaretTool aria-label="恢复选项"><Caret c="#c6c6c6" /></CaretTool>
          <Quick $gap={2} $before={14} aria-label="撤消">
            <svg width="15" height="14" viewBox="0 0 15 14" fill="none" stroke="#4472a8" strokeWidth="2.200"><path d="M6 1L2 5l4 4M2 5h7c4 0 5.500 4 2.500 7l-1 1" /></svg>
          </Quick>
          <CaretTool aria-label="撤消选项"><Caret c="#666" /></CaretTool>
          <Quick $gap={32} $before={18} aria-label="快速打印">
            <svg width="17" height="16" viewBox="0 0 17 16" fill="none" stroke="#9c9c9c"><path d="M11 4.500V3L8.500.500H1v13h5M8.500.500V3H11" /><path d="M6.500 8.500h10v4h-10zM8.500 8.500v-3h5v3M8.500 11.500h5v3.500h-5z" fill="#eee" /></svg>
          </Quick>
          <Quick $gap={0} aria-label="打印预览">
            <svg width="15" height="16" viewBox="0 0 15 16" fill="none" stroke="#9c9c9c"><path d="M12.500 8V3.500l-3-3h-8v14.500h8M9.500.5v3h3" /><circle cx="7.500" cy="8.500" r="3.500" strokeWidth="1.500" /><path d="M10 11l4 4" strokeWidth="2.200" /></svg>
          </Quick>
          <Quick $gap={0} $before={28} aria-label="自定义快速访问工具栏"><Caret c="#f2f2f2" /></Quick>
        </QuickAccess>

        <FormulaBar>
          <Field $w={124} $pad={6}>
            <input aria-label="名称框" defaultValue="MEDIAN" />
            <Caret c="#666" />
          </Field>
          <Grip $w={30}><Dots /></Grip>
          <FormulaButtons>
            <button aria-label="取消"><svg width="11" height="11" viewBox="0 0 11 11"><path d="M1 1l9 9M10 1L1 10" stroke="#666" strokeWidth="2" /></svg></button>
            <button aria-label="输入"><svg width="14" height="11" viewBox="0 0 14 11"><path d="M1 5.500L5 9.500 13 1" fill="none" stroke="#666" strokeWidth="2.500" /></svg></button>
            <button aria-label="插入函数">
              <svg width="14" height="16" viewBox="0 0 14 16" fill="#555"><text x="2" y="12" fontFamily="Liberation Serif" fontStyle="italic" fontWeight="700" fontSize="14">f<tspan fontSize="11" dy="1">x</tspan></text></svg>
            </button>
          </FormulaButtons>
          <Field $pad={11}>
            <input aria-label="编辑栏" defaultValue="=()/365" />
            <svg width="8" height="6" viewBox="0 0 8 6"><path d="M.8.8L4 4.200 7.200.8" fill="none" stroke="#555" strokeWidth="1.800" /></svg>
          </Field>
        </FormulaBar>

        <SheetArea>
          <GridPane>
            <Grid>
              <colgroup>
                <HeadCol />
                {columns.map(c => <DataCol key={c} />)}
              </colgroup>
              <thead>
                <tr>
                  <Corner><svg width="11" height="11" viewBox="0 0 11 11"><path d="M11 0v11H0z" fill="#b4b4b4" /></svg></Corner>
                  {columns.map(c => <ColHead key={c} scope="col" $active={c === 'D'}>{c}</ColHead>)}
                </tr>
              </thead>
              <tbody>
                {rowNumbers.map(r => (
                  <tr key={r}>
                    <RowHead scope="row" $active={r === 1}>{r + 1}</RowHead>
                    {columns.map((c, i) => (
                      <Cell key={c} $pageBreak={pageBreakAfter.includes(i)} $editing={r === 1 && c === 'D'}>
                        {data[r]?.[i]}
                        {r === 1 && c === 'D' && <EditingCell />}
                        {r === 3 && c === 'E' && (
                          <Pointer width="16" height="16" viewBox="0 0 16 16">
                            <path d="M5 1h5v4h5v5h-5v5H5v-5H1V5h4z" fill="#fff" stroke="#000" strokeWidth="1.500" />
                          </Pointer>
                        )}
                      </Cell>
                    ))}
                  </tr>
                ))}
              </tbody>
            </Grid>
          </GridPane>
          <VScroll>
            <div>
              <button aria-label="向上滚动"><Up /></button>
              <i />
            </div>
            <button aria-label="向下滚动"><Caret c="#777" /></button>
          </VScroll>
        </SheetArea>

        <SheetTabs>
          <TabNav>
            <button aria-label="上一个工作表"><Side c="#c0c0c0" /></button>
            <button aria-label="下一个工作表"><Side c="#c0c0c0" flip /></button>
          </TabNav>
          <SheetTab><span>成绩表</span></SheetTab>
          <SheetTab><span>员工信息</span></SheetTab>
          <SheetTab><span>田字格</span></SheetTab>
          <SheetTab $bg="#bdd7ee"><span>XXX公司销售额</span></SheetTab>
          <SheetTab $bg="#f4b084"><span>课程表</span></SheetTab>
          <SheetTab><span>Sheet5</span></SheetTab>
          <ActiveTab>Sheet1</ActiveTab>
          <AddSheet aria-label="新工作表">
            <svg width="17" height="17" viewBox="0 0 17 17" fill="none" stroke="#bcbcbc"><circle cx="8.500" cy="8.500" r="7.500" /><path d="M8.500 4.500v8M4.500 8.500h8" strokeWidth="2" /></svg>
          </AddSheet>
          <Grip $w={30} $push><Dots /></Grip>
          <HScroll>
            <HThumb><Side c="#555" /></HThumb>
            <InputMode>
              EN
              <svg width="11" height="14" viewBox="0 0 11 14" fill="none" stroke="#333" strokeWidth="1.200"><path d="M4 1c7 2 8 9 1 11.500H.5C4 10 5.500 6 4 1z" /></svg>
              简
            </InputMode>
          </HScroll>
        </SheetTabs>

        <StatusBar>
          <span>编辑</span>
          <span>数字</span>
          <svg width="13" height="13" viewBox="0 0 13 13" fill="none" stroke="#777"><path d="M1.500 5.500v7h11v-9H6" /><path d="M3 7.500h8M3 10.500h8" strokeDasharray="2 1" /><circle cx="3" cy="3" r="3" fill="#777" stroke="none" /><path d="M7 1h6v3H7z" fill="#777" stroke="none" /></svg>
          <Views>
            <button aria-label="普通"><svg width="14" height="13" viewBox="0 0 14 13" fill="none" stroke="#666"><path d="M.5.500h13v12H.5zM.5 4.500h13M.5 8.500h13M4.500.5v12M9.500.5v12" /></svg></button>
            <button aria-label="页面布局"><svg width="14" height="13" viewBox="0 0 14 13" fill="none" stroke="#666"><path d="M.5.500h13v12H.5zM3.500 2.500h7v8h-7zM5 4.500h4M5 6.500h4M5 8.500h4" /></svg></button>
            <button aria-label="分页预览"><svg width="14" height="13" viewBox="0 0 14 13" fill="none" stroke="#666"><path d="M.5.500h13v12H.5zM.5 8.500h9v-8M5.500.5v8" /></svg></button>
          </Views>
          <Zoom>
            <button aria-label="缩小"><svg width="6" height="9" viewBox="0 0 6 9"><path d="M0 4h6v2H0z" fill="#999" /></svg></button>
            <input type="range" aria-label="缩放" min="10" max="190" defaultValue="100" />
            <button aria-label="放大"><svg width="9" height="9" viewBox="0 0 9 9"><path d="M0 3.500h9v2H0zM3.500 0h2v9h-2z" fill="#999" /></svg></button>
            <span>100%</span>
          </Zoom>
        </StatusBar>

        <Brand>
          <BrandMark />
          <BrandText><strong>极光下载站</strong><em>www.xz7.com</em></BrandText>
        </Brand>
      </Window>
      <Taskbar><i /></Taskbar>
    </Shell>
  );
}
